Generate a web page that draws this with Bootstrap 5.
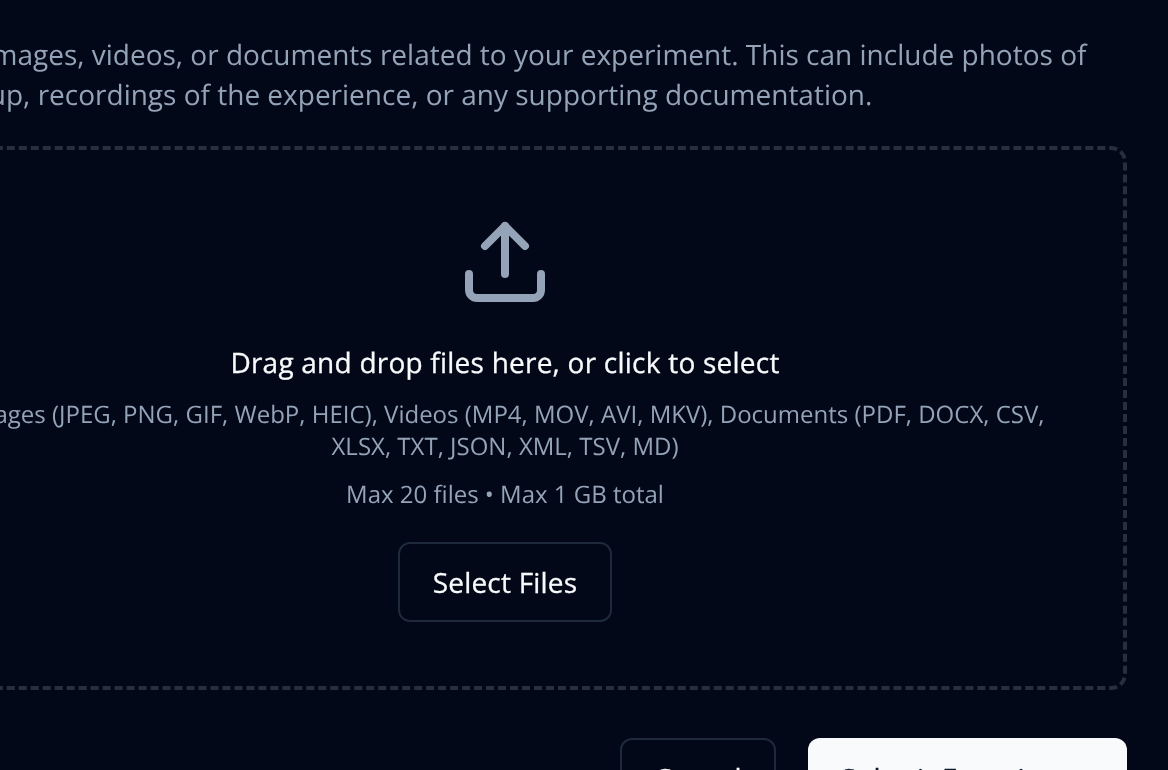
<!DOCTYPE html>
<html lang="en">
<head>
<meta charset="utf-8">
<title>Upload files</title>
<link href="https://cdn.jsdelivr.net/npm/bootstrap@5.3.0/dist/css/bootstrap.min.css" rel="stylesheet">
<style>
html, body { height: 770px; overflow: hidden; }
body { background: #020817; font-family: "Open Sans", sans-serif; color: #f8fafc; text-rendering: geometricPrecision; }
.page-wrap { width: 1244px; margin-left: -117px; padding-top: 35px; will-change: transform; }
.intro-text { font-size: 28px; line-height: 40px; color: #94a3b8; margin-bottom: 31px; }
.drop-zone { height: 544px; border: 4px dashed #272f3f; border-radius: 16px; padding-top: 64px; }
.drop-icon { width: 96px; height: 96px; display: block; color: #94a3b8; }
.drop-title { font-size: 28px; line-height: 40px; font-weight: 500; letter-spacing: .23px; -webkit-text-stroke: .3px #f8fafc; color: #f8fafc; margin-top: 33px; margin-bottom: 16px; }
.drop-types { font-size: 24px; line-height: 32px; color: #94a3b8; max-width: 1100px; margin-bottom: 16px; }
.drop-limit { font-size: 24px; line-height: 32px; color: #94a3b8; margin-bottom: 31px; }
.ghost-btn { height: 80px; font-size: 28px; font-weight: 500; letter-spacing: .2px; -webkit-text-stroke: .3px #f8fafc; color: #f8fafc; background: transparent; border: 2px solid #1e293b; border-radius: 12px; padding: 0; }
.fill-btn { height: 80px; font-size: 28px; font-weight: 500; letter-spacing: .2px; -webkit-text-stroke: .3px #0f172a; color: #0f172a; background: #f8fafc; border: 0; border-radius: 12px; padding: 0; }
.select-btn { width: 214px; }
.cancel-btn { width: 156px; }
.submit-btn { width: 319px; }
.action-row { gap: 32px; margin-top: 48px; }
</style>
</head>
<body>
<div class="page-wrap">
  <p class="intro-text">Upload images, videos, or documents related to your experiment. This can include photos of your setup, recordings of the experience, or any supporting documentation.</p>
  <div class="drop-zone d-flex flex-column align-items-center text-center">
    <svg class="drop-icon" viewBox="0 0 24 24" fill="none" stroke="currentColor" stroke-width="2" stroke-linecap="round" stroke-linejoin="round"><path d="M21 15v4a2 2 0 0 1-2 2H5a2 2 0 0 1-2-2v-4"/><polyline points="17 8 12 3 7 8"/><line x1="12" y1="3" x2="12" y2="15"/></svg>
    <p class="drop-title">Drag and drop files here, or click to select</p>
    <p class="drop-types">Images (JPEG, PNG, GIF, WebP, HEIC), Videos (MP4, MOV, AVI, MKV), Documents (PDF, DOCX, CSV, XLSX, TXT, JSON, XML, TSV, MD)</p>
    <p class="drop-limit">Max 20 files • Max 1 GB total</p>
    <button type="button" class="btn ghost-btn select-btn">Select Files</button>
  </div>
  <div class="d-flex justify-content-end action-row">
    <button type="button" class="btn ghost-btn cancel-btn">Cancel</button>
    <button type="button" class="btn fill-btn submit-btn">Submit Experiment</button>
  </div>
</div>
<script src="https://cdn.jsdelivr.net/npm/bootstrap@5.3.0/dist/js/bootstrap.bundle.min.js"></script>
</body>
</html>
